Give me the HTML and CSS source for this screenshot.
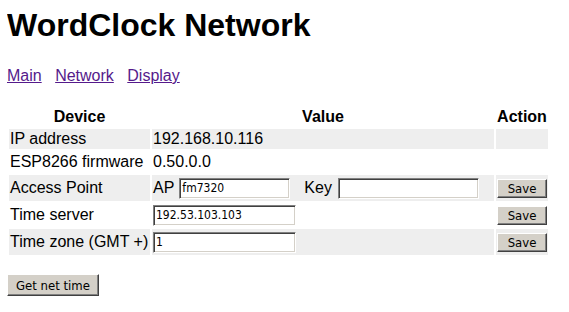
FILE: index.html
```html
<!DOCTYPE html>
<html lang="en">

<head>
    <meta charset="UTF-8">
    <meta name="viewport" content="width=device-width, initial-scale=1.0">
    <title>WordClock Network</title>
    <link rel="stylesheet" href="styles.css">
</head>

<body>
    <h1>WordClock Network</h1>

    <div class="nav">
        <a href="#">Main</a>
        <a href="#">Network</a>
        <a href="#">Display</a>
    </div>

    <table class="settings">
        <colgroup>
            <col class="col-device">
            <col class="col-value">
            <col class="col-action">
        </colgroup>
        <tr class="head">
            <th>Device</th>
            <th>Value</th>
            <th>Action</th>
        </tr>
        <tr class="odd row-text">
            <td>IP address</td>
            <td>192.168.10.116</td>
            <td></td>
        </tr>
        <tr class="row-esp">
            <td>ESP8266 firmware</td>
            <td>0.50.0.0</td>
            <td></td>
        </tr>
        <tr class="odd row-input">
            <td>Access Point</td>
            <td>
                <div class="pair">
                    <span>AP</span>
                    <input type="text" class="field field-ap" value="fm7320">
                    <span class="key-label">Key</span>
                    <input type="password" class="field field-key">
                </div>
            </td>
            <td><button class="btn">Save</button></td>
        </tr>
        <tr class="row-input row-mid">
            <td>Time server</td>
            <td><input type="text" class="field" value="192.53.103.103"></td>
            <td><button class="btn">Save</button></td>
        </tr>
        <tr class="odd row-input">
            <td>Time zone (GMT +)</td>
            <td><input type="text" class="field" value="1"></td>
            <td><button class="btn">Save</button></td>
        </tr>
    </table>

    <button class="btn btn-wide">Get net time</button>
</body>

</html>
```

FILE: styles.css
```css
body {
    font-family: 'Liberation Sans', Arial, sans-serif;
    font-size: 16px;
    margin: 0 7px;
    color: #000;
    background: #fff;
}

h1 {
    font-size: 32px;
    font-weight: bold;
    margin: 7px 0 23px;
}

.nav {
    line-height: 18px;
    margin-bottom: 20px;
}

.nav a {
    color: #551a8b;
    margin-right: 9px;
}

.settings {
    table-layout: fixed;
    width: 543px;
    border-spacing: 2px;
    margin-left: 0;
}

.col-device {
    width: 141px;
}

.col-value {
    width: 342px;
}

.col-action {
    width: 52px;
}

th,
td {
    padding: 1px;
    white-space: nowrap;
}

th {
    font-weight: bold;
    text-align: center;
    height: 18px;
}

td {
    text-align: left;
}

tr.odd td {
    background: #eeeeee;
}

.row-text td {
    height: 18px;
}

.row-esp td {
    height: 20px;
}

.row-input td {
    height: 24px;
}

.row-mid td {
    height: 22px;
}

.pair {
    display: flex;
    align-items: center;
}

.key-label {
    margin-left: 14px;
    margin-right: 6px;
}

.field {
    box-sizing: border-box;
    width: 143px;
    height: 21px;
    padding: 0 2px;
    font-family: 'DejaVu Sans Condensed', 'DejaVu Sans', sans-serif;
    font-size: 12px;
    color: #000;
    background: #fff;
    border: 1px solid;
    border-color: #808080 #fff #fff #808080;
    box-shadow: inset 1px 1px #404040, inset -1px -1px #d4d0c8;
    outline: none;
    display: block;
}

.field-ap {
    width: 111px;
    margin-left: 5px;
}

.field-key {
    width: 141px;
}

.btn {
    box-sizing: border-box;
    width: 50px;
    height: 19px;
    padding: 0;
    font-family: 'DejaVu Sans Condensed', 'DejaVu Sans', sans-serif;
    font-size: 13px;
    color: #000;
    background: #d4d0c8;
    border: 1px solid;
    border-color: #fff #404040 #404040 #fff;
    box-shadow: inset -1px -1px #808080;
    cursor: pointer;
    display: block;
}

.btn-wide {
    width: 92px;
    height: 22px;
    margin-top: 17px;
}
```
